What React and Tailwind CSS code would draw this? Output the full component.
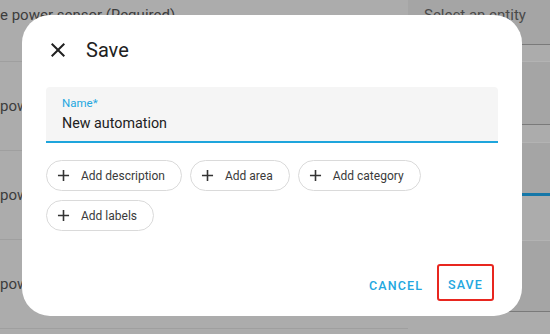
import React from "react";

function Plus({ className = "" }) {
  return (
    <svg viewBox="0 0 24 24" className={className} fill="currentColor">
      <path d="M19,13H13V19H11V13H5V11H11V5H13V11H19V13Z" />
    </svg>
  );
}

function Close({ className = "" }) {
  return (
    <svg viewBox="0 0 24 24" className={className} fill="currentColor">
      <path d="M19,6.41L17.59,5L12,10.59L6.41,5L5,6.41L10.59,12L5,17.59L6.41,19L12,13.41L17.59,19L19,17.59L13.41,12L19,6.41Z" />
    </svg>
  );
}

function Chip({ label }) {
  return (
    <div className="flex h-[31px] items-center rounded-full border border-[#dadada] bg-white pl-[7px] pr-[16px] text-[12px] text-[#3a3a3a]">
      <Plus className="h-[19px] w-[19px] text-[#333333]" />
      <span className="ml-[8px]">{label}</span>
    </div>
  );
}

function SideLabel() {
  return <span className="whitespace-nowrap text-[15px] text-[#3c3c3c]">pow</span>;
}

export default function App() {
  return (
    <div
      className="relative h-[334px] w-[550px] overflow-hidden bg-[#acacac]"
      style={{ fontFamily: "Roboto, 'Noto Sans', sans-serif" }}
    >
      {/* underlying page (dimmed) */}
      <div className="flex h-full w-full">
        <div className="flex w-[408px] flex-col">
          <div className="flex h-[62px] items-start border-b border-[#9f9f9f]">
            <span className="mt-[4px] text-[15px] text-[#3c3c3c]">e power sensor (Required)</span>
          </div>
          <div className="flex h-[89px] items-center border-b border-[#9f9f9f]">
            <SideLabel />
          </div>
          <div className="flex h-[89px] items-center border-b border-[#9f9f9f]">
            <SideLabel />
          </div>
          <div className="flex h-[89px] items-center border-b border-[#9f9f9f]">
            <SideLabel />
          </div>
        </div>
        <div className="flex flex-1 flex-col">
          <div className="h-[62px] border-b border-[#b3b3b3]">
            <div className="h-[45px] border-b border-[#7a7a7a] bg-[#a5a5a5] pl-[16px] pt-[4px] text-[15px] text-[#4a4a4a]">
              Select an entity
            </div>
          </div>
          <div className="h-[81px] border-b border-[#b3b3b3]">
            <div className="h-[63px] border-b border-[#7a7a7a] bg-[#a5a5a5]" />
          </div>
          <div className="h-[98px] border-b border-[#b3b3b3]">
            <div className="h-[53px] border-b-[3px] border-[#1577a8] bg-[#a5a5a5]" />
          </div>
          <div className="h-[71px] border-b border-[#7a7a7a] bg-[#a5a5a5]" />
        </div>
      </div>

      {/* dialog */}
      <div className="absolute left-[22px] top-[15px] flex h-[301px] w-[500px] flex-col rounded-[28px] bg-white">
        <div className="flex items-center pl-[24px] pt-[23px]">
          <Close className="h-[24px] w-[24px] text-[#212121]" />
          <span className="ml-[16px] text-[20px] leading-[24px] text-[#212121]">Save</span>
        </div>

        <div className="mx-[24px] mt-[25px] flex h-[56px] flex-col rounded-t-[4px] border-b-2 border-[#1ea5dc] bg-[#f5f5f5] pl-[16px]">
          <span className="mt-[10px] text-[11.5px] leading-[13px] text-[#23a7e0]">Name*</span>
          <span className="mt-[4px] text-[14.3px] leading-[18px] text-[#212121]">New automation</span>
        </div>

        <div className="mx-[24px] mt-[17px] flex flex-wrap gap-x-[8px] gap-y-[9px]">
          <Chip label="Add description" />
          <Chip label="Add area" />
          <Chip label="Add category" />
          <Chip label="Add labels" />
        </div>

        <div className="mt-auto flex items-center justify-end pb-[15px] pr-[28px]">
          <div className="px-[8px] pt-[8px] text-[12.5px] font-medium tracking-[1.1px] text-[#23a7e0]">CANCEL</div>
          <div className="ml-[6px] flex h-[37px] w-[57px] items-center justify-center rounded-[3px] border-2 border-[#e8261f] pt-[5px] text-[12.5px] font-medium tracking-[1.1px] text-[#23a7e0]">
            SAVE
          </div>
        </div>
      </div>
    </div>
  );
}
